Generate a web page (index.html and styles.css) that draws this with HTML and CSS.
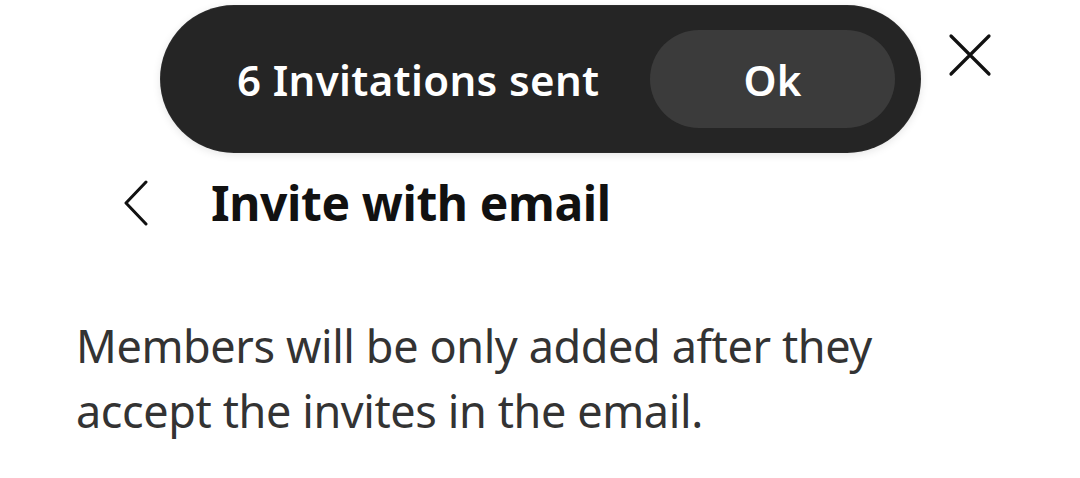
FILE: index.html
```html
<!DOCTYPE html>
<html lang="en">
<head>
    <meta charset="UTF-8">
    <meta name="viewport" content="width=device-width, initial-scale=1.0">
    <title>Invite with email</title>
    <link rel="stylesheet" href="styles.css">
</head>
<body>

    <!-- Painel de convite -->
    <div class="panel">
        <div class="top-bar">
            <button class="icon-btn close-btn" aria-label="Close">
                <svg width="44" height="44" viewBox="0 0 44 44">
                    <path d="M3 3 L41 41 M41 3 L3 41" stroke="#111" stroke-width="3.2" stroke-linecap="round" fill="none"/>
                </svg>
            </button>
        </div>

        <div class="title-row">
            <button class="icon-btn back-btn" aria-label="Back">
                <svg width="28" height="46" viewBox="0 0 28 46">
                    <path d="M24 2 L4 23 L24 44" stroke="#111" stroke-width="3" stroke-linecap="round" stroke-linejoin="round" fill="none"/>
                </svg>
            </button>
            <h1>Invite with email</h1>
        </div>

        <p class="info">Members will be only added after they accept the invites in the email.</p>
    </div>

    <!-- Aviso (toast) -->
    <div class="toast">
        <span class="toast-text">6 Invitations sent</span>
        <button class="toast-ok">Ok</button>
    </div>

</body>
</html>
```

FILE: styles.css
```css
/* Estilos Gerais */
* {
    box-sizing: border-box;
    margin: 0;
    padding: 0;
    font-family: 'Noto Sans', sans-serif;
}

body {
    background: #ffffff;
    color: #111;
    width: 1080px;
    height: 478px;
    overflow: hidden;
    position: relative;
}

.icon-btn {
    background: none;
    border: none;
    display: flex;
    align-items: center;
    justify-content: center;
    cursor: pointer;
}

/* Painel */
.panel {
    padding: 33px 0 0 76px;
}

.top-bar {
    display: flex;
    justify-content: flex-end;
    padding-right: 88px;
}

.title-row {
    display: flex;
    align-items: center;
    gap: 61px;
    margin-top: 100px;
    padding-left: 46px;
}

.title-row h1 {
    font-size: 48px;
    font-weight: 700;
    letter-spacing: -0.4px;
    line-height: 52px;
}

.info {
    margin-top: 84px;
    width: 860px;
    font-size: 45px;
    line-height: 65px;
    color: #333;
    font-weight: 400;
    letter-spacing: -0.4px;
}

/* Toast */
.toast {
    position: absolute;
    top: 6px;
    left: 161px;
    width: 759px;
    height: 146px;
    background: #252525;
    border-radius: 73px;
    box-shadow: 0 2px 10px rgba(0, 0, 0, 0.12), 0 0 0 1px #2e2e2e;
    display: flex;
    align-items: center;
    justify-content: space-between;
    padding: 0 25px 0 76px;
}

.toast-text {
    color: #fff;
    font-size: 42px;
    font-weight: 600;
    letter-spacing: 0.35px;
}

.toast-ok {
    width: 245px;
    height: 98px;
    border: none;
    border-radius: 49px;
    background: #3b3b3b;
    color: #fff;
    font-size: 42px;
    font-weight: 600;
    cursor: pointer;
}
```
